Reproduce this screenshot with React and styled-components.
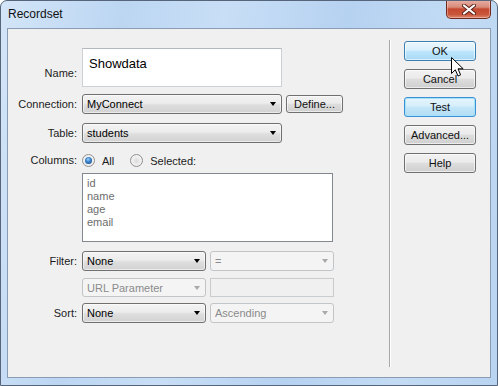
import React from 'react'
import styled, { createGlobalStyle, css } from 'styled-components'

const GlobalStyle = createGlobalStyle`
  html, body { margin: 0; padding: 0; background: #fff; }
  body { font-family: "Liberation Sans", Arial, sans-serif; }
`

const Window = styled.div`
  position: relative;
  width: 498px;
  height: 386px;
  box-sizing: border-box;
  border: 1px solid #56657a;
  border-radius: 7px 7px 0 0;
  background: linear-gradient(100deg, #d3e5f8 0%, #bcd6f2 22%, #c8def6 40%, #b6d2f1 62%, #c3dbf4 82%, #b9d4f1 100%);
  display: flex;
  flex-direction: column;
  overflow: hidden;
`

const TitleBar = styled.div`
  height: 27px;
  display: flex;
  align-items: center;
  padding-left: 7px;
`

const Title = styled.span`
  font-size: 12px;
  color: #111;
  margin-top: -1px;
`

const CloseButton = styled.div`
  margin-left: auto;
  margin-right: 6px;
  align-self: flex-start;
  margin-top: -1px;
  width: 45px;
  height: 19px;
  box-sizing: border-box;
  border: 1px solid #6e2a22;
  border-top: none;
  border-radius: 0 0 5px 5px;
  background: linear-gradient(#e8b1a6 0%, #d88a79 40%, #c5482f 50%, #c9553a 80%, #dc8a6c 100%);
  box-shadow: inset 0 0 0 1px rgba(255, 210, 200, 0.45);
  display: flex;
  align-items: center;
  justify-content: center;
`

const Client = styled.div`
  flex: 1;
  margin: 0 6px 7px 6px;
  border: 1px solid #8a9cb4;
  background: #f0f0f0;
  display: flex;
`

const Form = styled.div`
  width: 381px;
  box-sizing: border-box;
  padding-top: 19px;
  display: flex;
  flex-direction: column;
`

const Field = styled.div`
  display: grid;
  grid-template-columns: 69px auto;
  column-gap: 5px;
  align-items: center;
  margin-top: ${p => p.$gap || 0}px;
`

const Label = styled.span`
  text-align: right;
  font-size: 11px;
  line-height: 13px;
  color: #1c1c1c;
  ${p => p.$top && css`
    align-self: start;
    margin-top: ${p.$top}px;
  `}
`

const Controls = styled.div`
  display: flex;
  align-items: center;
  gap: ${p => p.$gap || 4}px;
`

const TextBox = styled.div`
  width: 200px;
  height: 39px;
  box-sizing: border-box;
  border: 1px solid #ccd1d6;
  border-top-color: #b3b8bd;
  background: #fff;
  padding: 7px 6px;
  font-size: 13px;
  color: #000;
`

const Select = styled.div`
  width: ${p => p.$w}px;
  height: ${p => p.$h || 20}px;
  box-sizing: border-box;
  border: 1px solid #707070;
  border-radius: 3px;
  background: linear-gradient(#f3f3f3 0%, #ececec 45%, #dedede 55%, #d2d2d2 100%);
  box-shadow: inset 0 0 0 1px rgba(255, 255, 255, 0.55);
  display: flex;
  align-items: center;
  padding-left: 4px;
  font-size: 11px;
  color: #000;
  ${p => p.$disabled && css`
    border-color: #c2c5c8;
    background: #f4f4f4;
    box-shadow: none;
    color: #8b8b8b;
  `}
`

const Arrow = styled.span`
  margin-left: auto;
  margin-right: 5px;
  width: 0;
  height: 0;
  border-top: 4px solid ${p => (p.$disabled ? '#a9a9a9' : '#000')};
  border-left: 3.5px solid transparent;
  border-right: 3.5px solid transparent;
`

const FlatBox = styled.div`
  width: 124px;
  height: 19px;
  box-sizing: border-box;
  border: 1px solid #c9cbcd;
  background: #f0f0f0;
`

const Button = styled.div`
  width: ${p => p.$w || 72}px;
  height: ${p => p.$h || 20}px;
  box-sizing: border-box;
  border: 1px solid #707070;
  border-radius: 3px;
  background: linear-gradient(#f2f2f2 0%, #ebebeb 45%, #dddddd 52%, #cfcfcf 100%);
  box-shadow: inset 0 0 0 1px rgba(255, 255, 255, 0.6);
  display: flex;
  align-items: center;
  justify-content: center;
  font-size: 11px;
  color: #111;
  ${p => p.$tone === 'hot' && css`
    border-color: #3c7fb1;
    background: linear-gradient(#eaf6fd 0%, #d9f0fc 45%, #bee6fd 52%, #a7d9f5 100%);
  `}
  ${p => p.$tone === 'default' && css`
    border-color: #3d8fd6;
    background: linear-gradient(#e6f5fc 0%, #d6eefb 45%, #c3e6f9 52%, #b2dcf3 100%);
    box-shadow: inset 0 0 0 1px #a6e3f8;
  `}
`

const RadioOption = styled.label`
  display: flex;
  align-items: center;
  gap: 7px;
  font-size: 11px;
  color: #1c1c1c;
`

const Radio = styled.span`
  width: 13px;
  height: 13px;
  box-sizing: border-box;
  border-radius: 50%;
  border: 1px solid #8e8f8f;
  background: radial-gradient(circle at 50% 55%, #dcdcdc 0%, #ededed 45%, #fbfbfb 100%);
  display: grid;
  place-items: center;
  ${p => p.$checked && css`
    &::after {
      content: '';
      width: 7px;
      height: 7px;
      border-radius: 50%;
      background: radial-gradient(circle at 45% 35%, #9fd0f6 0%, #3c86d0 40%, #0f3f7c 100%);
    }
  `}
`

const ListBox = styled.div`
  width: 251px;
  height: 69px;
  box-sizing: border-box;
  border: 1px solid #828790;
  background: #fff;
  padding: 3px 4px;
  font-size: 11px;
  line-height: 13px;
  color: #6d6d6d;
`

const Separator = styled.div`
  width: 1px;
  margin: 11px 0 10px;
  background: #a7a7a7;
  box-shadow: 1px 0 0 #fff;
`

const ButtonColumn = styled.div`
  padding: 12px 0 0 14px;
  display: flex;
  flex-direction: column;
  gap: 8px;
`

const Cursor = styled.svg`
  position: absolute;
  left: 450px;
  top: 56px;
`

const columns = ['id', 'name', 'age', 'email']

const DropDown = ({ w, h, disabled, children }) => (
  <Select $w={w} $h={h} $disabled={disabled}>
    {children}
    <Arrow $disabled={disabled} />
  </Select>
)

export default function App() {
  return (
    <>
      <GlobalStyle />
      <Window>
        <TitleBar>
          <Title>Recordset</Title>
          <CloseButton>
            <svg width="14" height="11" viewBox="0 0 14 11">
              <path d="M2 1.5 L12 9.5 M12 1.5 L2 9.5" stroke="#5a2118" strokeWidth="4" strokeLinecap="round" />
              <path d="M2 1.5 L12 9.5 M12 1.5 L2 9.5" stroke="#fff" strokeWidth="2.2" strokeLinecap="round" />
            </svg>
          </CloseButton>
        </TitleBar>
        <Client>
          <Form>
            <Field>
              <Label $top={19}>Name:</Label>
              <TextBox>Showdata</TextBox>
            </Field>
            <Field $gap={7}>
              <Label>Connection:</Label>
              <Controls>
                <DropDown w={200}>MyConnect</DropDown>
                <Button $w={57} $h={18}>Define...</Button>
              </Controls>
            </Field>
            <Field $gap={9}>
              <Label>Table:</Label>
              <Controls>
                <DropDown w={200}>students</DropDown>
              </Controls>
            </Field>
            <Field $gap={11}>
              <Label>Columns:</Label>
              <Controls $gap={16}>
                <RadioOption><Radio $checked />All</RadioOption>
                <RadioOption><Radio />Selected:</RadioOption>
              </Controls>
            </Field>
            <Field $gap={6}>
              <span />
              <ListBox>
                {columns.map(c => <div key={c}>{c}</div>)}
              </ListBox>
            </Field>
            <Field $gap={9}>
              <Label>Filter:</Label>
              <Controls>
                <DropDown w={124}>None</DropDown>
                <DropDown w={124} disabled>=</DropDown>
              </Controls>
            </Field>
            <Field $gap={7}>
              <span />
              <Controls>
                <DropDown w={124} h={19} disabled>URL Parameter</DropDown>
                <FlatBox />
              </Controls>
            </Field>
            <Field $gap={6}>
              <Label>Sort:</Label>
              <Controls>
                <DropDown w={124}>None</DropDown>
                <DropDown w={124} disabled>Ascending</DropDown>
              </Controls>
            </Field>
          </Form>
          <Separator />
          <ButtonColumn>
            <Button $tone="hot">OK</Button>
            <Button>Cancel</Button>
            <Button $tone="default">Test</Button>
            <Button>Advanced...</Button>
            <Button>Help</Button>
          </ButtonColumn>
        </Client>
        <Cursor width="14" height="21" viewBox="0 0 14 21">
          <path d="M0.5 0.5 L0.5 16.5 L4.3 12.8 L7 19 L9.6 17.9 L7 11.8 L12.2 11.8 Z" fill="#fff" stroke="#000" strokeWidth="1" strokeLinejoin="round" />
        </Cursor>
      </Window>
    </>
  )
}
